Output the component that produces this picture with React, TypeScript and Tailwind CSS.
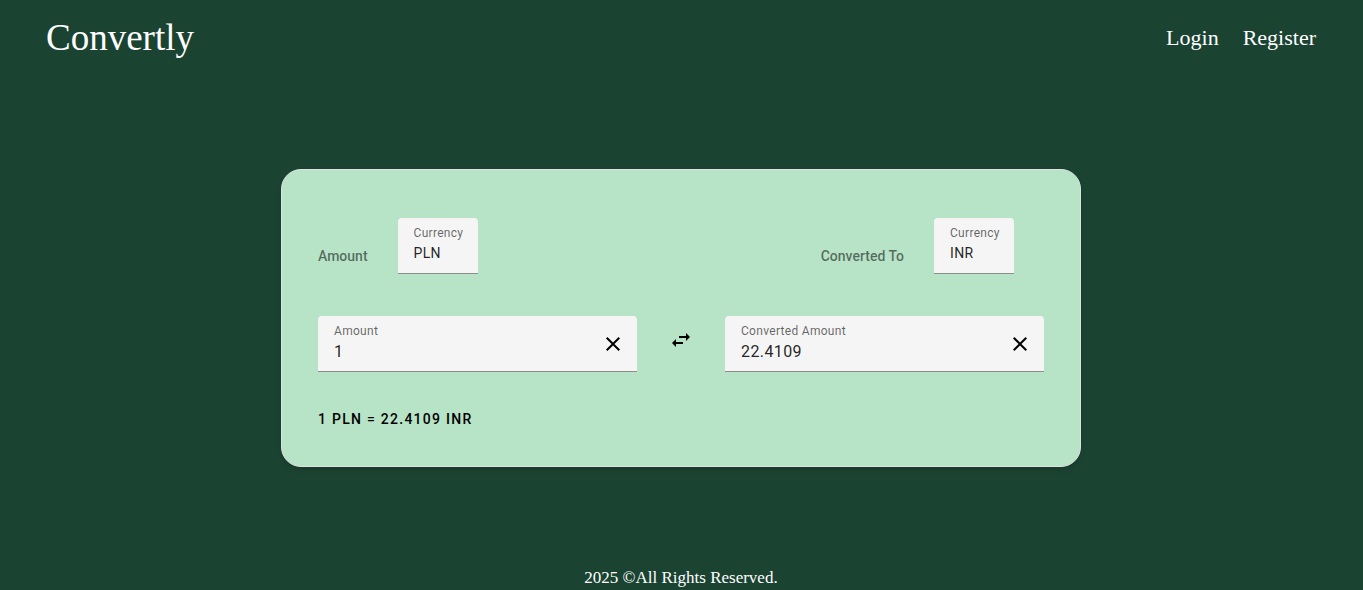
import { useState } from "react";
import { MdClose, MdSwapHoriz } from "react-icons/md";

const RATES: Record<string, number> = { PLN: 22.4109, INR: 1, USD: 83.12, EUR: 90.45 };
const CODES = Object.keys(RATES);

function format(value: number) {
  return String(Number(value.toFixed(4)));
}

interface CurrencySelectProps {
  id: string;
  value: string;
  onChange: (value: string) => void;
}

function CurrencySelect({ id, value, onChange }: CurrencySelectProps) {
  return (
    <div className="flex h-14 w-20 flex-col rounded-t border-b border-[#8c8c8c] bg-[#f5f5f5] pl-4 pt-1.5">
      <label htmlFor={id} className="text-xs leading-[18px] tracking-wide text-black/60">
        Currency
      </label>
      <select
        id={id}
        value={value}
        onChange={(e) => onChange(e.target.value)}
        className="h-[22px] w-full cursor-pointer appearance-none bg-transparent text-sm tracking-wide text-black/87 outline-none"
      >
        {CODES.map((code) => (
          <option key={code}>{code}</option>
        ))}
      </select>
    </div>
  );
}

interface AmountFieldProps {
  id: string;
  label: string;
  value: string;
  onChange: (value: string) => void;
}

function AmountField({ id, label, value, onChange }: AmountFieldProps) {
  return (
    <div className="flex h-14 min-w-0 flex-1 items-center rounded-t border-b border-[#8c8c8c] bg-[#f5f5f5] pl-4">
      <div className="flex h-full min-w-0 flex-1 flex-col pt-1.5">
        <label htmlFor={id} className="text-xs leading-[18px] tracking-wide text-black/60">
          {label}
        </label>
        <input
          id={id}
          value={value}
          inputMode="decimal"
          onChange={(e) => onChange(e.target.value)}
          className="h-6 w-full bg-transparent text-base tracking-wide text-black/87 outline-none"
        />
      </div>
      <button
        type="button"
        aria-label={`Clear ${label}`}
        onClick={() => onChange("")}
        className="flex size-12 cursor-pointer items-center justify-center text-black"
      >
        <MdClose className="size-6" />
      </button>
    </div>
  );
}

export default function App() {
  const [from, setFrom] = useState("PLN");
  const [to, setTo] = useState("INR");
  const [amount, setAmount] = useState("1");
  const rate = RATES[from] / RATES[to];
  const converted = amount === "" ? "" : format((Number(amount) || 0) * rate);

  const swap = () => {
    setFrom(to);
    setTo(from);
  };

  return (
    <div className="flex min-h-screen flex-col bg-[#1b4332] pr-px font-['Georgia','Liberation_Serif',serif] text-white">
      <header className="flex h-19 items-center justify-between px-[46px]">
        <a href="#" className="text-[37px] leading-10">
          Convertly
        </a>
        <nav className="flex gap-6 text-[22px] leading-7">
          <a href="#login">Login</a>
          <a href="#register">Register</a>
        </nav>
      </header>

      <main className="flex flex-1 items-center justify-center px-4 font-['Roboto',sans-serif]">
        <section className="w-full max-w-[800px] rounded-[20px] border border-[#e0e0e0] bg-[#b7e4c7] px-9 pb-9 pt-12 shadow-md">
          <div className="flex justify-between pr-[30px]">
            <div className="flex items-center gap-[30px]">
              <h2 className="pt-5 text-sm font-medium text-black/54">Amount</h2>
              <CurrencySelect id="from-currency" value={from} onChange={setFrom} />
            </div>
            <div className="flex items-center gap-[30px]">
              <h2 className="pt-5 text-sm font-medium text-black/54">Converted To</h2>
              <CurrencySelect id="to-currency" value={to} onChange={setTo} />
            </div>
          </div>

          <div className="mt-[42px] flex gap-5">
            <AmountField id="amount" label="Amount" value={amount} onChange={setAmount} />
            <button
              type="button"
              aria-label="Swap currencies"
              onClick={swap}
              className="flex size-12 cursor-pointer items-center justify-center text-black"
            >
              <MdSwapHoriz className="size-6" />
            </button>
            <AmountField
              id="converted-amount"
              label="Converted Amount"
              value={converted}
              onChange={(value) =>
                setAmount(value === "" ? "" : format((Number(value) || 0) / rate))
              }
            />
          </div>

          <p className="mt-9 text-sm leading-[22px] font-medium tracking-[0.09em] text-black">
            1 {from} = {format(rate)} {to}
          </p>
        </section>
      </main>

      <footer className="pb-0.5 pt-2 text-center text-[17px] leading-5">
        2025 ©All Rights Reserved.
      </footer>
    </div>
  );
}
